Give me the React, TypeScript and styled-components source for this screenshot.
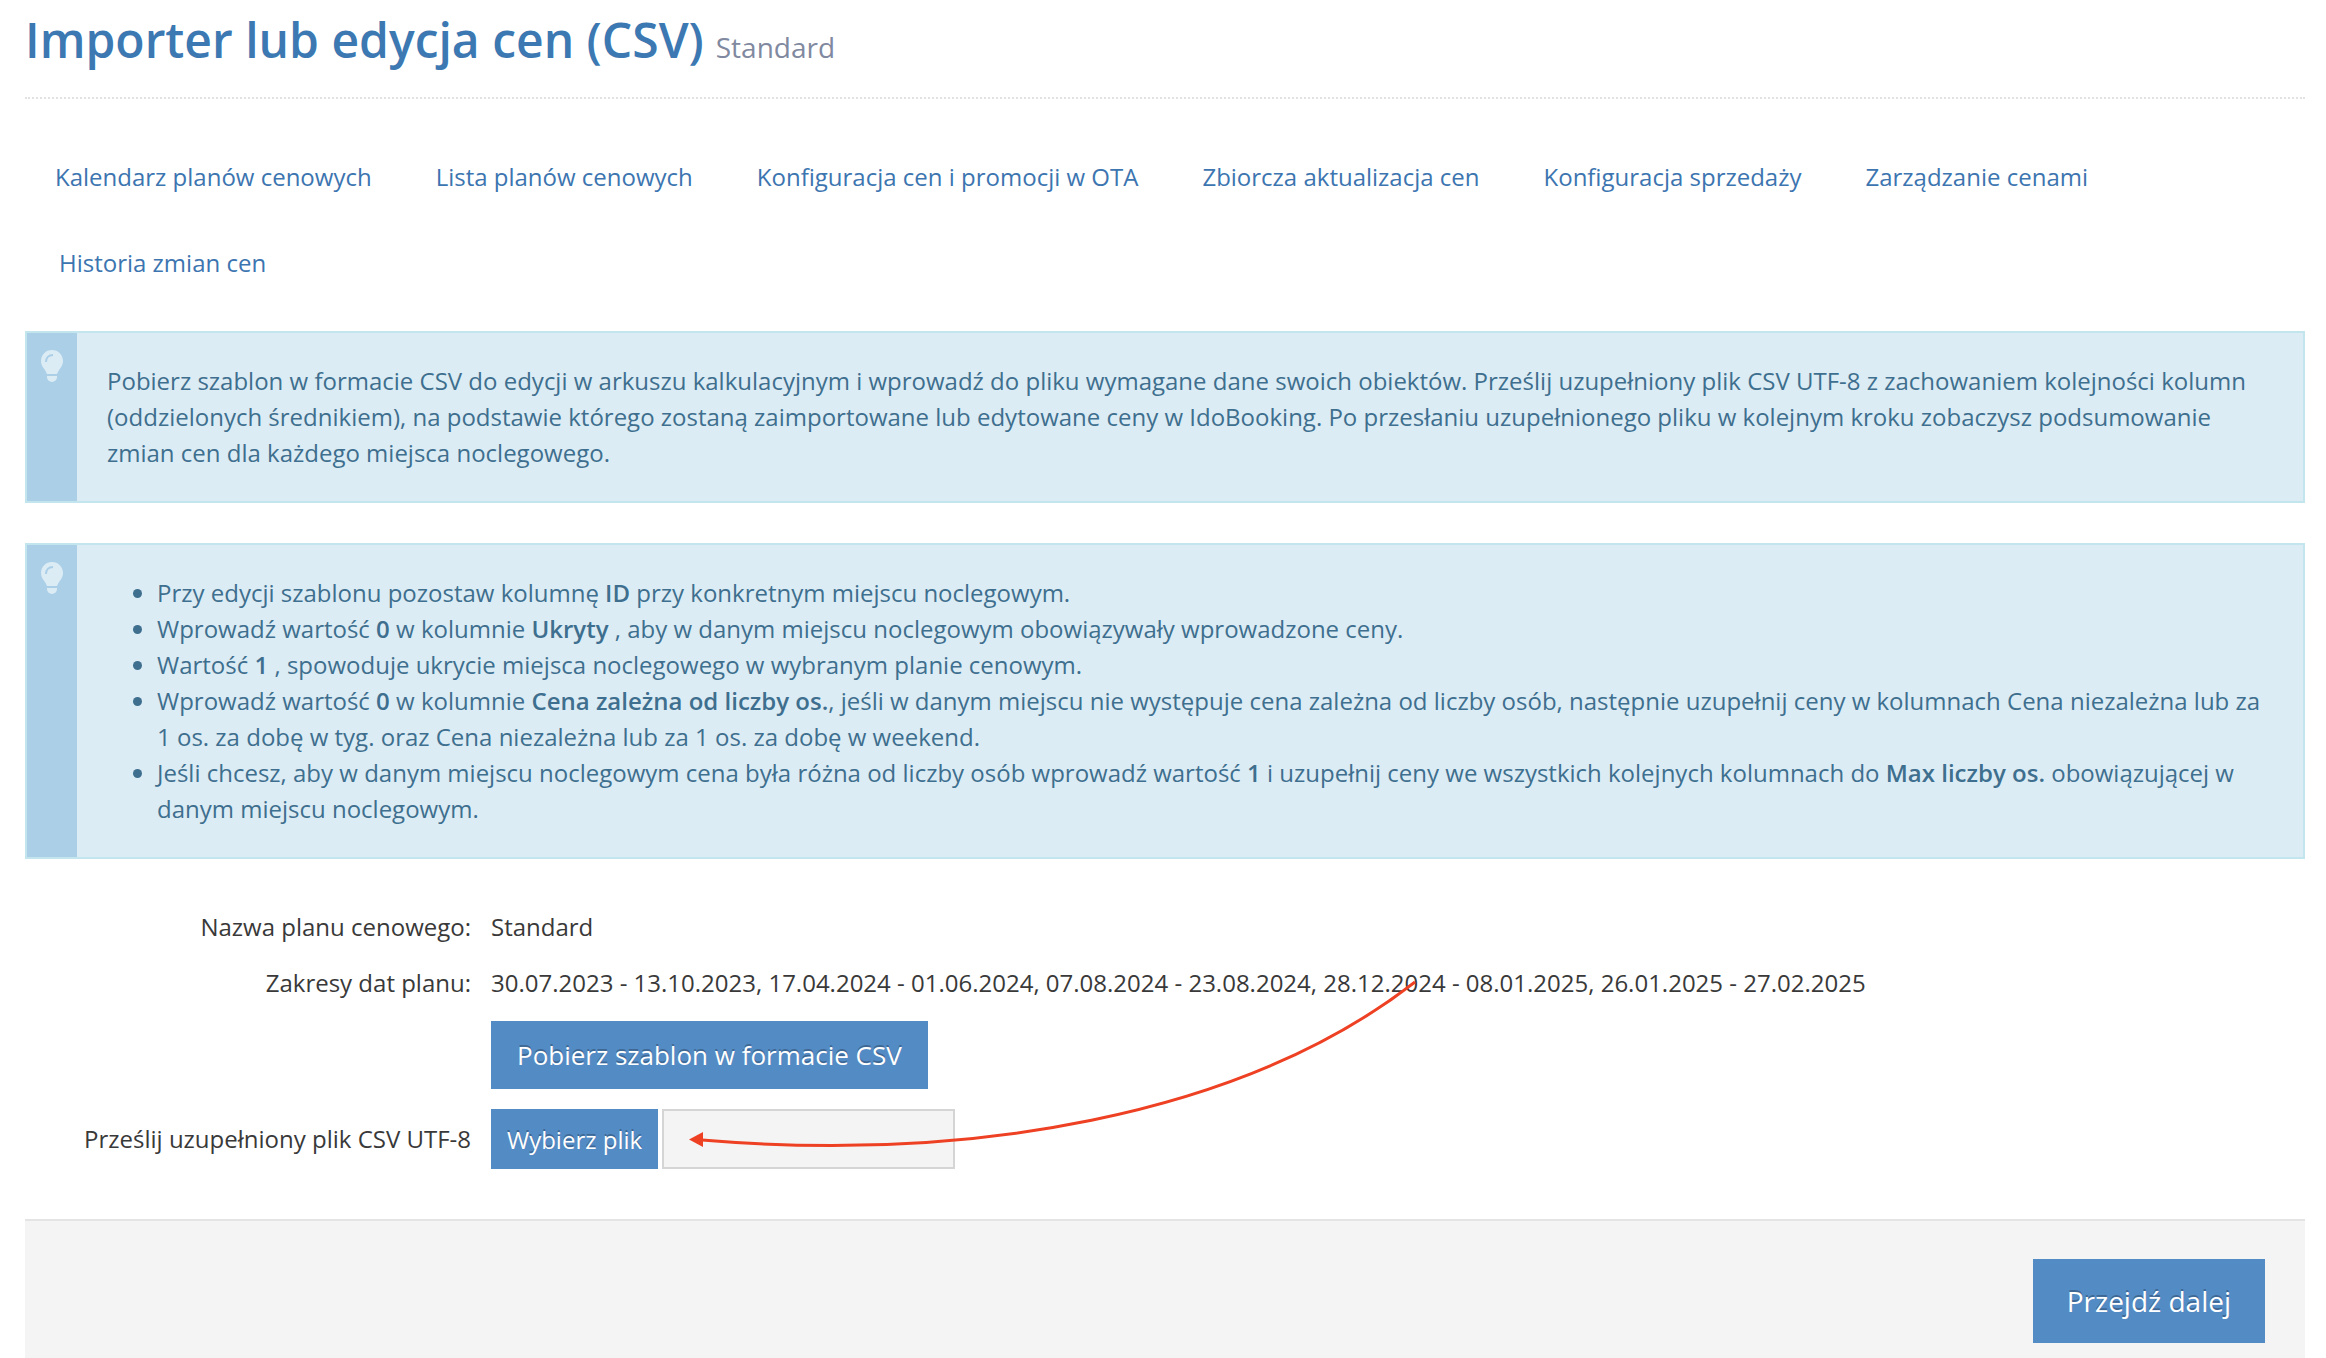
import React from "react";
import styled, { createGlobalStyle } from "styled-components";

const GlobalStyle = createGlobalStyle`
  * { box-sizing: border-box; }
  body {
    margin: 0;
    background: #fff;
    color: #393939;
    font: 400 24px/36px "Open Sans", "Noto Sans", sans-serif;
  }
`;

const Page = styled.div`
  display: flex;
  flex-direction: column;
  min-height: 100vh;
  padding: 0 21px 0 25px;
`;

const Header = styled.header`
  display: flex;
  align-items: baseline;
  gap: 12px;
  padding: 8px 0 25px;
  border-bottom: 2px dotted #e2e2e2;
`;

const Title = styled.h1`
  margin: 0;
  color: #3c78b2;
  font-size: 48px;
  font-weight: 600;
  line-height: 64px;
`;

const Subtitle = styled.span`
  color: #8089a0;
  font-size: 28px;
`;

const Nav = styled.nav`
  padding: 40px 0 30px 2px;
`;

const NavList = styled.ul`
  display: flex;
  flex-wrap: wrap;
  row-gap: 10px;
  margin: 0;
  padding: 0;
  list-style: none;
`;

const NavItem = styled.li`
  margin: 0 4px;

  &:first-child {
    margin-left: 0;
  }
`;

const NavLink = styled.a`
  display: block;
  padding: 20px 28px;
  color: #3c75b0;
  text-decoration: none;
`;

const Notices = styled.div`
  display: grid;
  gap: 40px;
`;

const Notice = styled.section`
  display: flex;
  border: 2px solid #c3e6ee;
  background: #dcecf5;
  color: #3e6f8e;
`;

const NoticeMark = styled.div`
  display: flex;
  flex: none;
  justify-content: center;
  width: 50px;
  padding-top: 17px;
  background: #abcfe7;
`;

const NoticeBody = styled.div`
  flex: 1;
  padding: 30px;
`;

const NoticeText = styled.p`
  margin: 0;
`;

const NoticeList = styled.ul`
  margin: 0;
  padding-left: 50px;
`;

const Strong = styled.strong`
  font-weight: 600;
`;

const Form = styled.form`
  position: relative;
  display: grid;
  gap: 20px;
  padding: 50px 0;
`;

const Row = styled.div`
  display: grid;
  grid-template-columns: 446px 1fr;
  column-gap: 20px;
  align-items: center;
`;

const RowLabel = styled.label`
  text-align: right;
`;

const RowValue = styled.div`
  display: flex;
  grid-column: 2;
  gap: 4px;
`;

const sizes = {
  small: { height: 60, pad: 16, font: 24 },
  medium: { height: 68, pad: 26, font: 26 },
  large: { height: 84, pad: 34, font: 28 },
};

const Button = styled.button<{ $size: keyof typeof sizes }>`
  height: ${({ $size }) => sizes[$size].height}px;
  padding: 0 ${({ $size }) => sizes[$size].pad}px;
  border: 0;
  background: #538bc5;
  color: #fff;
  font-family: inherit;
  font-size: ${({ $size }) => sizes[$size].font}px;
  text-shadow: 0 -2px 0 rgba(0, 0, 0, 0.25);
  white-space: nowrap;
`;

const FileName = styled.input`
  width: 293px;
  height: 60px;
  padding: 0 12px;
  border: 2px solid #d5d5d5;
  background: #f4f4f4;
  color: inherit;
  font: inherit;
`;

const Arrow = styled.svg`
  position: absolute;
  top: 120px;
  left: 660px;
  pointer-events: none;
`;

const Footer = styled.footer`
  display: flex;
  flex: 1;
  align-items: flex-start;
  justify-content: flex-end;
  padding: 38px 40px 15px;
  border-top: 2px solid #e4e4e4;
  background: #f4f4f4;
`;

const navItems = [
  "Kalendarz planów cenowych",
  "Lista planów cenowych",
  "Konfiguracja cen i promocji w OTA",
  "Zbiorcza aktualizacja cen",
  "Konfiguracja sprzedaży",
  "Zarządzanie cenami",
  "Historia zmian cen",
];

const Bulb = () => (
  <svg width="22" height="32" viewBox="0 0 22 32" aria-hidden="true">
    <path
      d="M11 0C4.900 0 0 4.900 0 11C0 14 1.200 16.200 2.700 18.300C4.100 20.300 5.200 22 6 24H16C16.800 22 17.900 20.300 19.300 18.300C20.800 16.200 22 14 22 11C22 4.900 17.100 0 11 0Z"
      fill="#dcecf5"
    />
    <path d="M6 26H16V27A5 5 0 0 1 6 27Z" fill="#dcecf5" />
    <path d="M5 12C5 8 7.500 5 12 5" fill="none" stroke="#abcfe7" strokeWidth="2" />
  </svg>
);

const InfoNotice = ({ children }: { children: React.ReactNode }) => (
  <Notice>
    <NoticeMark>
      <Bulb />
    </NoticeMark>
    <NoticeBody>{children}</NoticeBody>
  </Notice>
);

export default function App() {
  return (
    <Page>
      <GlobalStyle />
      <Header>
        <Title>Importer lub edycja cen (CSV)</Title>
        <Subtitle>Standard</Subtitle>
      </Header>

      <Nav>
        <NavList>
          {navItems.map((item) => (
            <NavItem key={item}>
              <NavLink href="#">{item}</NavLink>
            </NavItem>
          ))}
        </NavList>
      </Nav>

      <Notices>
        <InfoNotice>
          <NoticeText>
            Pobierz szablon w formacie CSV do edycji w arkuszu kalkulacyjnym i wprowadź do pliku
            wymagane dane swoich obiektów. Prześlij uzupełniony plik CSV UTF-8 z zachowaniem
            kolejności kolumn (oddzielonych średnikiem), na podstawie którego zostaną zaimportowane
            lub edytowane ceny w IdoBooking. Po przesłaniu uzupełnionego pliku w kolejnym kroku
            zobaczysz podsumowanie zmian cen dla każdego miejsca noclegowego.
          </NoticeText>
        </InfoNotice>
        <InfoNotice>
          <NoticeList>
            <li>
              Przy edycji szablonu pozostaw kolumnę <Strong>ID</Strong> przy konkretnym miejscu
              noclegowym.
            </li>
            <li>
              Wprowadź wartość <Strong>0</Strong> w kolumnie <Strong>Ukryty</Strong> , aby w danym
              miejscu noclegowym obowiązywały wprowadzone ceny.
            </li>
            <li>
              Wartość <Strong>1</Strong> , spowoduje ukrycie miejsca noclegowego w wybranym planie
              cenowym.
            </li>
            <li>
              Wprowadź wartość <Strong>0</Strong> w kolumnie{" "}
              <Strong>Cena zależna od liczby os.</Strong>, jeśli w danym miejscu nie występuje cena
              zależna od liczby osób, następnie uzupełnij ceny w kolumnach Cena niezależna lub za 1
              os. za dobę w tyg. oraz Cena niezależna lub za 1 os. za dobę w weekend.
            </li>
            <li>
              Jeśli chcesz, aby w danym miejscu noclegowym cena była różna od liczby osób wprowadź
              wartość <Strong>1</Strong> i uzupełnij ceny we wszystkich kolejnych kolumnach do{" "}
              <Strong>Max liczby os.</Strong> obowiązującej w danym miejscu noclegowym.
            </li>
          </NoticeList>
        </InfoNotice>
      </Notices>

      <Form>
        <Row>
          <RowLabel as="span">Nazwa planu cenowego:</RowLabel>
          <RowValue>Standard</RowValue>
        </Row>
        <Row>
          <RowLabel as="span">Zakresy dat planu:</RowLabel>
          <RowValue>
            30.07.2023 - 13.10.2023, 17.04.2024 - 01.06.2024, 07.08.2024 - 23.08.2024, 28.12.2024 -
            08.01.2025, 26.01.2025 - 27.02.2025
          </RowValue>
        </Row>
        <Row>
          <RowValue>
            <Button type="button" $size="medium">
              Pobierz szablon w formacie CSV
            </Button>
          </RowValue>
        </Row>
        <Row>
          <RowLabel htmlFor="csv-file">Prześlij uzupełniony plik CSV UTF-8</RowLabel>
          <RowValue>
            <Button type="button" $size="small">
              Wybierz plik
            </Button>
            <FileName id="csv-file" type="text" readOnly />
          </RowValue>
        </Row>
        <Arrow width="740" height="180" viewBox="0 0 740 180" aria-hidden="true">
          <path d="M730 3C555 139 280 183 17 161" fill="none" stroke="#ee4023" strokeWidth="3" />
          <path d="M4 160.500L18 153L18 168Z" fill="#ee4023" />
        </Arrow>
      </Form>

      <Footer>
        <Button type="submit" $size="large">
          Przejdź dalej
        </Button>
      </Footer>
    </Page>
  );
}
